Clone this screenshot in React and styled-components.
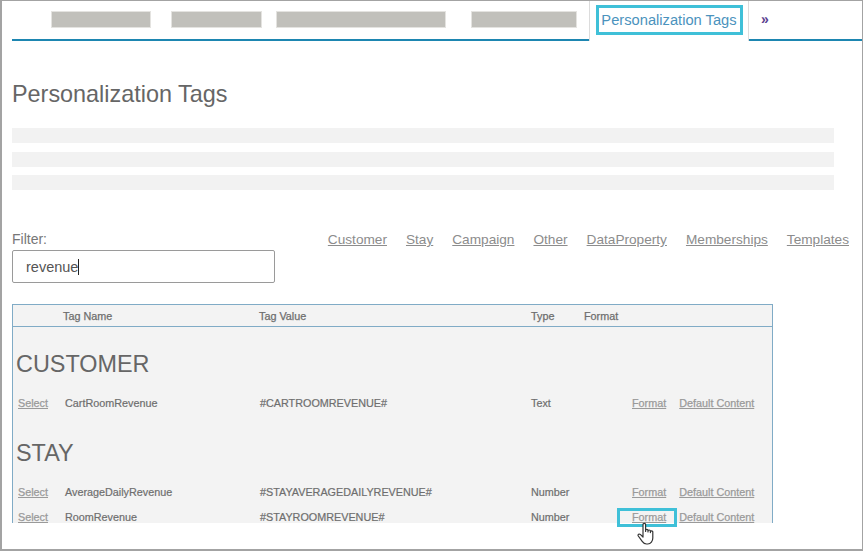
import styled, { createGlobalStyle } from "styled-components";

const GlobalStyle = createGlobalStyle`
  html, body {
    margin: 0;
    padding: 0;
    background: #ffffff;
  }
  * {
    box-sizing: border-box;
  }
`;

const tabBlocks = [
  { width: 100.5, gap: 19.5 },
  { width: 91, gap: 14 },
  { width: 171, gap: 25 },
  { width: 106, gap: 12 },
];

const filterLinks = [
  "Customer",
  "Stay",
  "Campaign",
  "Other",
  "DataProperty",
  "Memberships",
  "Templates",
];

const groups = [
  {
    title: "CUSTOMER",
    rows: [{ name: "CartRoomRevenue", value: "#CARTROOMREVENUE#", type: "Text" }],
  },
  {
    title: "STAY",
    rows: [
      { name: "AverageDailyRevenue", value: "#STAYAVERAGEDAILYREVENUE#", type: "Number" },
      { name: "RoomRevenue", value: "#STAYROOMREVENUE#", type: "Number" },
    ],
  },
];

const App = () => {
  return (
    <>
      <GlobalStyle />
      <Frame>
        <TabBar>
          <TabBlocks>
            {tabBlocks.map((block) => (
              <TabBlock key={block.width} $width={block.width} $gap={block.gap} />
            ))}
          </TabBlocks>
          <ActiveTab>Personalization Tags</ActiveTab>
          <MoreTab>»</MoreTab>
        </TabBar>

        <Content>
          <Title>Personalization Tags</Title>
          <Bars>
            <Bar />
            <Bar />
            <Bar />
          </Bars>

          <FilterRow>
            <FilterColumn>
              <FilterLabel>Filter:</FilterLabel>
              <FilterInput>
                revenue
                <Caret />
              </FilterInput>
            </FilterColumn>
            <FilterLinks>
              {filterLinks.map((link) => (
                <FilterLink key={link}>{link}</FilterLink>
              ))}
            </FilterLinks>
          </FilterRow>

          <TagTable>
            <HeaderRow>
              <span />
              <HeaderCell>Tag Name</HeaderCell>
              <HeaderCell>Tag Value</HeaderCell>
              <HeaderCell>Type</HeaderCell>
              <HeaderCell>Format</HeaderCell>
            </HeaderRow>
            {groups.map((group) => (
              <Group key={group.title}>
                <GroupTitle>{group.title}</GroupTitle>
                {group.rows.map((row) => (
                  <TagRow key={row.name}>
                    <RowLink>Select</RowLink>
                    <RowCell>{row.name}</RowCell>
                    <RowCell>{row.value}</RowCell>
                    <RowCell>{row.type}</RowCell>
                    <RowActions>
                      <RowLink>Format</RowLink>
                      <RowLink>Default Content</RowLink>
                    </RowActions>
                  </TagRow>
                ))}
              </Group>
            ))}
          </TagTable>
        </Content>

        <TabHighlight />
        <FormatHighlight />
        <HandCursor width="20" height="23" viewBox="0 0 20 23">
          <path
            d="M6 12V2.6a1.3 1.3 0 0 1 2.6 0V9.5V8.6a1.2 1.2 0 0 1 2.4 0V10V9.2a1.2 1.2 0 0 1 2.4 0V10.6V10a1.2 1.2 0 0 1 2.4 0V16c0 3.2-2 6-5 6H9.5c-2 0-3.2-1-4.3-2.6L1.3 14c-.8-1.3.8-2.6 2-1.6L6 15Z"
            fill="#ffffff"
            stroke="#333333"
            strokeWidth="1.2"
            strokeLinejoin="round"
          />
        </HandCursor>
      </Frame>
    </>
  );
};

const Frame = styled.div`
  position: relative;
  width: 863px;
  height: 551px;
  border: 1px solid #a3a3a3;
  border-left-width: 2px;
  border-bottom-width: 2px;
  overflow: hidden;
  font-family: "Liberation Sans", Arial, sans-serif;
`;

const TabBar = styled.div`
  display: flex;
  height: 40px;
  margin-left: 10px;
`;

const TabBlocks = styled.div`
  display: flex;
  width: 577px;
  padding: 10px 0 0 39px;
  border-bottom: 2px solid #1d86b1;
`;

const TabBlock = styled.div`
  width: ${(props) => props.$width}px;
  height: 17px;
  margin-right: ${(props) => props.$gap}px;
  background: #c1c0bb;
  border: 1px solid #e4e3e0;
`;

const ActiveTab = styled.div`
  width: 160px;
  padding-top: 11px;
  border-left: 1px solid #dcdcdc;
  border-right: 1px solid #dcdcdc;
  color: #4b93bd;
  font-size: 14.7px;
  text-align: center;
`;

const MoreTab = styled.div`
  flex: 1;
  padding: 10px 0 0 12px;
  border-bottom: 2px solid #1d86b1;
  color: #5b3f8f;
  font-size: 14px;
  font-weight: bold;
`;

const Content = styled.div`
  padding-left: 10px;
`;

const Title = styled.h1`
  margin: 39px 0 0;
  height: 28px;
  color: #666666;
  font-size: 23.4px;
  font-weight: normal;
  line-height: 28px;
`;

const Bars = styled.div`
  display: flex;
  flex-direction: column;
  gap: 8.5px;
  margin-top: 20px;
`;

const Bar = styled.div`
  width: 822px;
  height: 15px;
  background: #f2f2f2;
`;

const FilterRow = styled.div`
  display: flex;
  justify-content: space-between;
  margin-top: 41px;
  width: 837px;
`;

const FilterColumn = styled.div`
  display: flex;
  flex-direction: column;
  gap: 2px;
`;

const FilterLabel = styled.label`
  color: #777777;
  font-size: 14px;
  line-height: 17px;
`;

const FilterInput = styled.div`
  display: flex;
  align-items: center;
  width: 263px;
  height: 33px;
  padding-left: 13px;
  border: 1px solid #9a9a9a;
  border-radius: 2px;
  color: #555555;
  font-size: 14.5px;
`;

const Caret = styled.span`
  width: 1px;
  height: 16px;
  background: #222222;
`;

const FilterLinks = styled.div`
  display: flex;
  gap: 19px;
`;

const FilterLink = styled.a`
  color: #8c8c8c;
  font-size: 13.65px;
  line-height: 17px;
  text-decoration: underline;
`;

const TagTable = styled.div`
  width: 761px;
  height: 219px;
  margin-top: 21px;
  border: 1px solid #80abc6;
  border-bottom: none;
  background: #f3f3f3;
  overflow: hidden;
`;

const HeaderRow = styled.div`
  display: grid;
  grid-template-columns: 50px 196px 272px 53px 1fr;
  align-items: center;
  height: 22px;
  border-bottom: 1px solid #80abc6;
`;

const HeaderCell = styled.span`
  color: #6e6e6e;
  font-size: 10.8px;
  -webkit-text-stroke: 0.25px #6e6e6e;
`;

const Group = styled.div`
  display: flex;
  flex-direction: column;
  margin-bottom: 1px;
`;

const GroupTitle = styled.h2`
  margin: 23px 0 0 3px;
  height: 28px;
  color: #666666;
  font-size: 23.4px;
  font-weight: normal;
  line-height: 28px;
`;

const TagRow = styled.div`
  display: grid;
  grid-template-columns: 47px 195px 271px 87px 1fr;
  align-items: center;
  height: 25px;
  padding-left: 5px;
  font-size: 10.8px;

  ${GroupTitle} + & {
    margin-top: 12px;
  }
`;

const RowCell = styled.span`
  color: #6e6e6e;
  -webkit-text-stroke: 0.2px #6e6e6e;
`;

const RowLink = styled.a`
  color: #9a9a9a;
  text-decoration: underline;
  -webkit-text-stroke: 0.25px #9a9a9a;
`;

const RowActions = styled.div`
  display: flex;
  gap: 13px;
  padding-left: 14px;
`;

const TabHighlight = styled.div`
  position: absolute;
  top: 4px;
  left: 594px;
  width: 147px;
  height: 30px;
  border: 3px solid #3fc0d8;
`;

const FormatHighlight = styled.div`
  position: absolute;
  top: 507px;
  left: 615px;
  width: 60px;
  height: 19px;
  border: 3px solid #3fc0d8;
`;

const HandCursor = styled.svg`
  position: absolute;
  top: 521px;
  left: 635px;
`;

export default App;
